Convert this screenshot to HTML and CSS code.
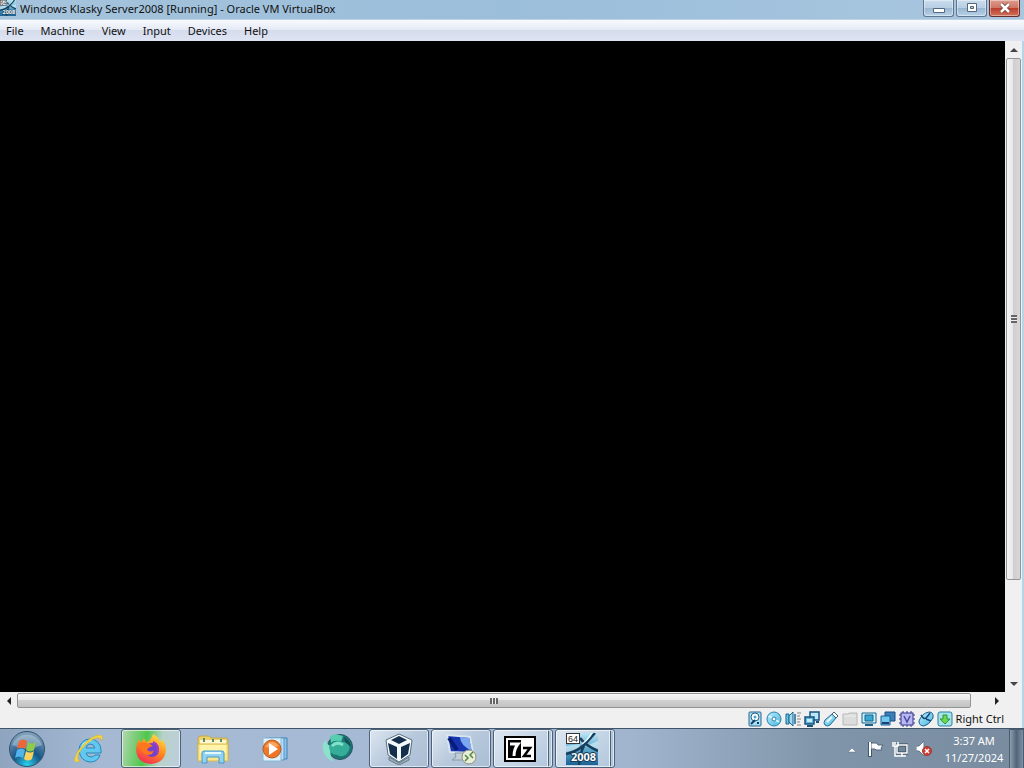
FILE: index.html
```
<!DOCTYPE html>
<html lang="en">

<head>
    <meta charset="UTF-8">
    <meta name="viewport" content="width=device-width, initial-scale=1.0">
    <title>Windows Klasky Server2008 [Running] - Oracle VM VirtualBox</title>
    <link rel="stylesheet" href="styles.css">
</head>

<body>
    <!-- shared gradients and the 2008 machine icon -->
    <svg class="defs" aria-hidden="true">
        <defs>
            <linearGradient id="sky" x1="0" y1="0" x2="0" y2="1">
                <stop offset="0" stop-color="#b9e4f3" />
                <stop offset=".5" stop-color="#5fa9cf" />
                <stop offset="1" stop-color="#1a6294" />
            </linearGradient>
            <linearGradient id="cyan" x1="0" y1="0" x2="1" y2="1">
                <stop offset="0" stop-color="#bfefff" />
                <stop offset="1" stop-color="#45b5e0" />
            </linearGradient>
            <symbol id="server2008" viewBox="0 0 32 32">
                <rect width="32" height="32" fill="url(#sky)" />
                <path d="M0 13L14 11L12 17L0 19zM20 13L32 8V16z" fill="#e3f6fc" opacity=".6" />
                <path d="M0 21Q12 18 18 12T29 0M14 5Q19 12 32 18M18 13Q14 20 13 32" fill="none" stroke="#173f5a" stroke-width="2.500" />
                <path d="M16 11Q22 7 26 0" fill="none" stroke="#e4f8ff" stroke-width="1.500" />
                <rect x=".5" y=".5" width="13" height="10" fill="#fff" stroke="#333" />
                <text x="2" y="9" font-size="9" font-family="Liberation Sans, sans-serif" fill="#222">64</text>
                <text x="5" y="28" font-size="11" font-weight="bold" font-family="Open Sans, sans-serif" fill="#fff" stroke="#143b54" stroke-width="2" paint-order="stroke">2008</text>
            </symbol>
        </defs>
    </svg>

    <header class="titlebar">
        <svg class="title-icon" viewBox="0 0 32 32"><use href="#server2008" /></svg>
        <h1>Windows Klasky Server2008 [Running] - Oracle VM VirtualBox</h1>
        <div class="window-buttons">
            <button class="win-btn" aria-label="Minimize">
                <svg width="14" height="12" viewBox="0 0 14 12"><path d="M1.500 6.500h11v4h-11z" fill="#fff" stroke="#53677f" /></svg>
            </button>
            <button class="win-btn" aria-label="Maximize">
                <svg width="14" height="12" viewBox="0 0 14 12">
                    <path d="M2.500 1.500h9v8h-9z" fill="#fff" stroke="#53677f" />
                    <path d="M5.500 4.500h3v2h-3z" fill="#b4cbe2" stroke="#53677f" />
                </svg>
            </button>
            <button class="win-btn close" aria-label="Close">
                <svg width="14" height="12" viewBox="0 0 14 12">
                    <path d="M3 2l8 8M11 2L3 10" stroke="#703b3b" stroke-width="4" />
                    <path d="M3 2l8 8M11 2L3 10" stroke="#fff" stroke-width="2.500" />
                </svg>
            </button>
        </div>
    </header>

    <nav class="menubar">
        <a href="#">File</a>
        <a href="#">Machine</a>
        <a href="#">View</a>
        <a href="#">Input</a>
        <a href="#">Devices</a>
        <a href="#">Help</a>
    </nav>

    <main class="viewport">
        <div class="screen"></div>
        <div class="scroll vertical">
            <button aria-label="Scroll up"><svg width="8" height="4" viewBox="0 0 8 4"><path d="M0 4L4 0L8 4z" fill="#444" /></svg></button>
            <div class="thumb"><span class="grip"></span></div>
            <div class="track"></div>
            <button aria-label="Scroll down"><svg width="8" height="4" viewBox="0 0 8 4"><path d="M0 0L4 4L8 0z" fill="#444" /></svg></button>
        </div>
        <div class="scroll horizontal">
            <button aria-label="Scroll left"><svg width="4" height="8" viewBox="0 0 4 8"><path d="M4 0L0 4L4 8z" fill="#222" /></svg></button>
            <div class="thumb"><span class="grip"></span></div>
            <div class="track"></div>
            <button aria-label="Scroll right"><svg width="4" height="8" viewBox="0 0 4 8"><path d="M0 0L4 4L0 8z" fill="#222" /></svg></button>
        </div>
    </main>

    <footer class="statusbar">
        <!-- hard disk -->
        <svg viewBox="0 0 16 16">
            <rect x="2" y="1" width="12" height="14" rx="1" fill="#a9dff3" stroke="#28638d" />
            <circle cx="8" cy="6" r="4" fill="#fff" stroke="#28638d" />
            <circle cx="8" cy="6" r="1.500" fill="#48a7d3" />
            <path d="M4 13l4-4M10 12h2" stroke="#123f67" stroke-width="2" />
        </svg>
        <!-- optical disk -->
        <svg viewBox="0 0 16 16">
            <circle cx="8" cy="8" r="7" fill="url(#cyan)" stroke="#2782ad" />
            <path d="M8 8L3 5M8 8l5 3" stroke="#d9f7ff" stroke-width="2" />
            <circle cx="8" cy="8" r="2" fill="#fff" stroke="#2782ad" />
        </svg>
        <!-- audio -->
        <svg viewBox="0 0 16 16">
            <path d="M1 3h3v10H1z" fill="#69c4e8" stroke="#1d658e" />
            <path d="M4 5l4-4v14l-4-4z" fill="#9adcf3" stroke="#1d658e" />
            <path d="M10 3v10" stroke="#1d658e" stroke-width="1.500" />
            <path d="M12 2h4M12 5h3M12 8h4M12 11h3M12 14h4" stroke="#bbb" stroke-width="2" />
        </svg>
        <!-- network -->
        <svg viewBox="0 0 16 16">
            <path d="M6 1h9v8H6z" fill="#b8e9f8" stroke="#1a527c" stroke-width="1.500" />
            <path d="M1 6h9v7H1z" fill="#59b9e3" stroke="#1a527c" stroke-width="1.500" />
            <path d="M3 8h5v3H3z" fill="#c8f0fb" />
            <path d="M3 15h6M12 11h3" stroke="#1a527c" stroke-width="2" />
        </svg>
        <!-- usb -->
        <svg viewBox="0 0 16 16">
            <path d="M2 9l7-6 4 4-6 7q-3 2-5 0-2-2 0-5z" fill="url(#cyan)" stroke="#266c93" />
            <path d="M9 3l2-2 4 4-2 2z" fill="#fff" stroke="#45647a" />
            <path d="M4 11l5-5" stroke="#e7faff" stroke-width="2" />
        </svg>
        <!-- shared folders -->
        <svg viewBox="0 0 16 16">
            <path d="M1 3h5l1-1h8v12H1z" fill="#dcdcdc" stroke="#b8b8b8" />
            <path d="M2 5h12" stroke="#eee" />
        </svg>
        <!-- display -->
        <svg viewBox="0 0 16 16">
            <path d="M1 2h14v10H1z" fill="#c8f0fb" stroke="#1a638b" />
            <path d="M4 4h8v6H4z" fill="#39a6d3" stroke="#1a638b" />
            <path d="M4 14h8" stroke="#1a638b" stroke-width="2" />
        </svg>
        <!-- recording -->
        <svg viewBox="0 0 16 16">
            <path d="M5 1h10v9H5z" fill="#397eb9" stroke="#1d4b83" />
            <path d="M1 5h9v9H1z" fill="#70c7ee" stroke="#1d5d91" />
            <path d="M2 12h7" stroke="#1d3c78" stroke-width="2" />
        </svg>
        <!-- cpu features -->
        <svg viewBox="0 0 16 16">
            <rect x="2" y="2" width="12" height="12" fill="#b8b7f2" stroke="#34348a" />
            <path d="M4 0v2M8 0v2M12 0v2M4 14v2M8 14v2M12 14v2M0 4h2M0 8h2M0 12h2M14 4h2M14 8h2M14 12h2" stroke="#34348a" />
            <path d="M5 5l3 6 3-6" fill="none" stroke="#4949a2" stroke-width="1.500" />
        </svg>
        <!-- mouse -->
        <svg viewBox="0 0 16 16">
            <path d="M1 10Q1 15 6 15Q11 14 15 7Q16 1 11 1Q4 2 1 10z" fill="url(#cyan)" stroke="#225d8b" />
            <path d="M3 4Q6 9 8 7T12 2M8 8l5 2" fill="none" stroke="#174a77" stroke-width="1.500" />
        </svg>
        <!-- keyboard capture -->
        <svg viewBox="0 0 16 16">
            <rect x="1" y="1" width="14" height="14" rx="2" fill="#a4e4e8" stroke="#287fa2" />
            <path d="M6 4h4v4h3l-5 5-5-5h3z" fill="#6ad94f" stroke="#2f9342" />
        </svg>
        <span>Right Ctrl</span>
    </footer>

    <div class="taskbar">
        <button class="start" aria-label="Start">
            <svg width="38" height="38" viewBox="0 0 38 38">
                <defs>
                    <radialGradient id="orb" cx=".5" cy=".95" r=".9">
                        <stop offset="0" stop-color="#28d3ef" />
                        <stop offset=".45" stop-color="#175587" />
                        <stop offset="1" stop-color="#7f9fba" />
                    </radialGradient>
                </defs>
                <circle cx="19" cy="19" r="17.500" fill="url(#orb)" stroke="#31526b" />
                <path d="M4 15A16 16 0 0 1 34 15Q19 22 4 15z" fill="#fff" opacity=".3" />
                <path d="M11 11q4-3 8 0l-2 8q-4-3-8 0z" fill="#ee6536" />
                <path d="M20 12q4 3 8 0l-2 8q-4 3-8 0z" fill="#8fcb4b" />
                <path d="M9 20q4-3 8 0l-2 8q-4-3-8 0z" fill="#51b5ec" />
                <path d="M18 21q4 3 8 0l-2 8q-4 3-8 0z" fill="#fbd35c" />
            </svg>
        </button>
        <button class="task" aria-label="Internet Explorer">
            <svg width="32" height="32" viewBox="0 0 32 32">
                <path d="M6 17A11 11 0 0 1 28 17V20H13Q14 24 18 24Q21 24 22 22H27Q25 29 17 29Q7 28 6 17zM13 15H22Q21 11 17 11Q14 11 13 15z" fill="#62c8f0" stroke="#2589bd" />
                <path d="M9 14Q11 8 18 8" fill="none" stroke="#c7f1ff" stroke-width="1.500" />
                <path d="M7 28Q-3 32 5 18Q17 2 27 2Q31 3 29 8Q28 4 23 5Q13 9 6 20Q3 27 7 28z" fill="#f3d647" stroke="#d0aa27" stroke-width=".5" />
            </svg>
        </button>
        <button class="task open firefox" aria-label="Firefox">
            <svg width="32" height="32" viewBox="0 0 32 32">
                <defs>
                    <linearGradient id="fox" x1=".8" y1="0" x2=".3" y2="1">
                        <stop offset="0" stop-color="#ffe54a" />
                        <stop offset=".5" stop-color="#ff8a1c" />
                        <stop offset="1" stop-color="#f22b59" />
                    </linearGradient>
                </defs>
                <path d="M18 1Q24 4 25 9Q27 8 27 6Q31 11 31 17Q30 30 16 31Q2 30 1 17Q1 11 4 6L6 10L9 5L11 9Q16 8 18 1z" fill="url(#fox)" />
                <circle cx="17" cy="17" r="7" fill="#7441cc" />
                <path d="M4 10Q12 8 18 13Q13 14 12 17Q16 20 19 17Q17 24 10 21Q5 18 4 10z" fill="#ff771d" />
                <path d="M18 9Q25 12 22 20" fill="none" stroke="#a13ccb" stroke-width="2" />
            </svg>
        </button>
        <button class="task" aria-label="Windows Explorer">
            <svg width="34" height="32" viewBox="0 0 34 32">
                <path d="M2 6q0-3 3-3h8l2 2h15q2 0 2 3v18H2z" fill="#ecd068" stroke="#c2a64f" />
                <path d="M4 7h26v5H4z" fill="#fff8ce" />
                <path d="M8 5v4M17 6v3M25 6v3" stroke="#5b8d68" stroke-width="2" />
                <path d="M2 11h30v17H2z" fill="#f8e78e" stroke="#d7b94d" />
                <path d="M4 12h26v8H4z" fill="#fff4a9" />
                <path d="M6 30V20q0-2 2-2h18q2 0 2 2v10h-5v-6H11v6z" fill="#92d2f1" stroke="#4a98c6" />
                <path d="M9 20h16" stroke="#e2f9ff" stroke-width="2" />
            </svg>
        </button>
        <button class="task" aria-label="Windows Media Player">
            <svg width="28" height="28" viewBox="0 0 28 28">
                <path d="M8 3h18v21H8z" fill="#8fc2e8" stroke="#3f80b8" />
                <path d="M5 3h18v22H5z" fill="#b8def4" stroke="#5795c6" />
                <path d="M2 3h18v23H2z" fill="#dff2fb" stroke="#86b8d7" />
                <circle cx="11" cy="14" r="9" fill="#ee7625" stroke="#b45b2c" />
                <path d="M4 12Q10 2 18 11Q11 14 4 12z" fill="#ffbb75" opacity=".7" />
                <path d="M8 8v12l9-6z" fill="#fff" />
            </svg>
        </button>
        <button class="task" aria-label="Globe">
            <svg width="34" height="32" viewBox="0 0 34 32">
                <circle cx="20" cy="14" r="12.500" fill="#1c7774" stroke="#28565f" />
                <path d="M10 3Q15 0 23 3L21 9Q15 6 11 10z" fill="#58cdb0" />
                <path d="M3 10Q1 24 14 29Q8 20 12 13Q7 13 6 7z" fill="#8ce1cc" />
                <path d="M9 14Q15 5 23 9Q31 9 29 17Q25 26 17 22Q10 22 9 14z" fill="#35ad98" />
                <path d="M12 13Q17 8 23 12" fill="none" stroke="#82e2ca" stroke-width="3" />
                <path d="M24 4q6 3 7 10l-6-5z" fill="#165158" />
            </svg>
        </button>
        <button class="task open" aria-label="Oracle VM VirtualBox">
            <svg width="30" height="32" viewBox="0 0 30 32">
                <path d="M5 24l10 6 10-6v3l-10 5-10-5z" fill="#9bb0be" stroke="#667b88" />
                <path d="M2 7L15 1L28 7L26 22L15 29L4 22z" fill="#f4f9fc" stroke="#596f7f" />
                <path d="M7 7L15 3L23 7L15 11zM4 10L13 14V26L6 21zM17 14L26 10L24 21L17 26z" fill="#152e4c" />
            </svg>
        </button>
        <button class="task open" aria-label="Remote Desktop">
            <svg width="32" height="32" viewBox="0 0 32 32">
                <path d="M2 2L25 4L28 20L5 19z" fill="#1835b0" stroke="#d9e5ef" stroke-width="2" />
                <path d="M15 4L24 5L27 18Q15 12 15 4z" fill="#7ba9ef" />
                <path d="M4 5l8 12" stroke="#061c79" stroke-width="4" />
                <path d="M10 20h8l1 4h5v3H7l4-3z" fill="#c2ced5" stroke="#899aa5" />
                <circle cx="24" cy="24" r="7" fill="#e9edda" stroke="#8a947e" />
                <path d="M20 22l3 3-3 3M28 19l-3 3 3 3" fill="none" stroke="#528a3d" stroke-width="1.500" />
            </svg>
        </button>
        <button class="task open stacked" aria-label="7-Zip">
            <svg width="32" height="26" viewBox="0 0 32 26">
                <rect x="1" y="1" width="30" height="24" fill="#fff" stroke="#000" stroke-width="2" />
                <rect x="4" y="4" width="13" height="18" fill="#000" />
                <path d="M6 8h8Q10 13 10 20" fill="none" stroke="#fff" stroke-width="3" />
                <path d="M19 12h7l-6 8h7" fill="none" stroke="#000" stroke-width="2.500" />
            </svg>
        </button>
        <button class="task open stacked" aria-label="Windows Klasky Server2008">
            <svg width="32" height="32" viewBox="0 0 32 32"><use href="#server2008" /></svg>
        </button>

        <div class="tray">
            <button class="tray-more" aria-label="Show hidden icons">
                <svg width="8" height="16" viewBox="0 0 8 16"><path d="M0 11L4 7L8 11z" fill="#fff" stroke="#5a6f82" stroke-width=".5" /></svg>
            </button>
            <button aria-label="Action Center">
                <svg width="16" height="16" viewBox="0 0 16 16">
                    <path d="M2 1v15" stroke="#42576c" stroke-width="4" />
                    <path d="M3 2h6l1 2h5l-2 3 1 2H8L7 8H3z" fill="#fff" stroke="#506579" />
                    <path d="M2 1v14" stroke="#fff" stroke-width="2" />
                </svg>
            </button>
            <button aria-label="Network">
                <svg width="16" height="16" viewBox="0 0 16 16">
                    <path d="M5 4h10v8H5z" fill="#718799" stroke="#34495d" stroke-width="3" />
                    <path d="M5 4h10v8H5zM10 12v3M6 15h8" fill="none" stroke="#fff" stroke-width="1.500" />
                    <path d="M1 1v4h5V1M3 1v3M3 5v10h3" fill="none" stroke="#fff" stroke-width="1.500" />
                </svg>
            </button>
            <button aria-label="Volume muted">
                <svg width="16" height="16" viewBox="0 0 16 16">
                    <path d="M0 5h3l5-5v15l-5-5H0z" fill="#fff" stroke="#667889" />
                    <circle cx="11" cy="10" r="4.500" fill="#cf3c34" stroke="#a4382f" />
                    <path d="M9 8l4 4M13 8l-4 4" stroke="#fff" stroke-width="1.500" />
                </svg>
            </button>
            <time class="clock" datetime="2024-11-27T03:37">3:37 AM<br>11/27/2024</time>
            <button class="show-desktop" aria-label="Show desktop"></button>
        </div>
    </div>
</body>

</html>
```
FILE: styles.css
```
* {
    box-sizing: border-box;
}

body {
    margin: 0;
    height: 100vh;
    display: flex;
    flex-direction: column;
    overflow: hidden;
    font-family: "Noto Sans", "Open Sans", sans-serif;
    font-size: 11px;
    color: #111;
    background-color: #f0f0f0;
}

button {
    padding: 0;
    border: none;
    background: none;
    display: flex;
    align-items: center;
    justify-content: center;
}

svg {
    display: block;
    flex: none;
}

.defs {
    position: absolute;
    width: 0;
    height: 0;
}

/* title bar */
.titlebar {
    flex: none;
    height: 20px;
    display: flex;
    background: linear-gradient(to right, #a5c3dc, #9bbeda 50%, #a9c6df);
    border-bottom: 1px solid #bdd3e8;
}

.title-icon {
    width: 16px;
    height: 16px;
}

h1 {
    margin: 0 auto 0 4px;
    font-size: 11px;
    line-height: 18px;
    font-weight: normal;
    white-space: nowrap;
}

.window-buttons {
    display: flex;
    gap: 2px;
    padding-right: 4px;
}

.win-btn {
    width: 31px;
    height: 17px;
    border: 1px solid #60778f;
    border-top: none;
    border-radius: 0 0 3px 3px;
    background: linear-gradient(#c9dcec, #b7cee4 50%, #98b5d0 50%, #b9d2e9);
    box-shadow: inset 0 0 0 1px rgba(255, 255, 255, 0.4);
}

.win-btn.close {
    border-color: #6c2b2b;
    background: linear-gradient(#dc9b8c, #cf7664 50%, #b83d2b 50%, #d47158);
}

/* menu */
.menubar {
    flex: none;
    height: 21px;
    display: flex;
    gap: 17px;
    padding-left: 6px;
    line-height: 21px;
    background: linear-gradient(#f8fafd, #e5eaf5 45%, #d5dcec 50%, #dee4f2);
}

.menubar a {
    color: #111;
    text-decoration: none;
}

/* guest screen and its scrollbars */
.viewport {
    flex: 1;
    min-height: 0;
    display: grid;
    grid-template-columns: 1fr 17px;
    grid-template-rows: 1fr 17px;
    border-right: 2px solid #b5d6ea;
}

.screen {
    background-color: #000;
}

.scroll {
    display: flex;
    background-color: #f0f0f0;
}

.scroll button {
    flex: 0 0 17px;
}

.vertical {
    flex-direction: column;
    padding: 0 1px;
}

.thumb {
    flex: 521;
    display: flex;
    align-items: center;
    justify-content: center;
    border: 1px solid #949494;
    border-radius: 2px;
}

.track {
    flex: 95;
}

.vertical .thumb {
    background: linear-gradient(to right, #f5f5f5, #e6e6e8 50%, #cfcfd2 50%, #d8d8db);
}

.horizontal .thumb {
    flex: 954;
    background: linear-gradient(#f5f5f5, #e7e7e7 50%, #d0d0d0 50%, #c3c3c3);
}

.horizontal {
    padding: 1px 0;
}

.horizontal .track {
    flex: 17;
}

.grip {
    width: 8px;
    height: 6px;
    background: repeating-linear-gradient(to right, #666 0 2px, #eee 2px 3px);
}

.vertical .grip {
    width: 6px;
    height: 8px;
    background: repeating-linear-gradient(#666 0 2px, #eee 2px 3px);
}

/* status bar */
.statusbar {
    flex: none;
    height: 19px;
    display: flex;
    align-items: center;
    justify-content: flex-end;
    gap: 3px;
    padding: 1px 18px 0 0;
    line-height: 18px;
    border-right: 2px solid #b5d6ea;
}

.statusbar svg {
    width: 16px;
    height: 16px;
}

/* taskbar */
.taskbar {
    flex: none;
    height: 40px;
    display: flex;
    gap: 2px;
    border-top: 1px solid #3f566a;
    background: linear-gradient(to right, #8fa5bf, #a5b9d3 10%, #a7bad5 45%, #a0b4ce 62%, #8195aa 80%, #788b9f);
}

.start {
    width: 57px;
    padding-right: 3px;
}

.task {
    width: 60px;
    border: 1px solid transparent;
    border-radius: 3px;
}

.task.open {
    border-color: #4d6279;
    background: linear-gradient(135deg, #dce6f1, #b8c9dc 50%, #a9bdd4);
    box-shadow: inset 0 0 0 1px rgba(255, 255, 255, 0.6);
}

.task.firefox {
    background: linear-gradient(100deg, #b5d7b3, #4fc64c 40%, #b8d2ca 65%, #bdcddd);
}

/* several windows grouped under one button */
.task.stacked {
    padding-right: 6px;
    background: linear-gradient(to left, #b3c6da 3px, #4d6279 3px, #4d6279 4px, #e5edf5 4px, #e5edf5 5px, transparent 5px), linear-gradient(135deg, #dce6f1, #b1c6dc);
}

.tray {
    margin-left: auto;
    display: flex;
    align-items: center;
    gap: 8px;
    color: #fff;
}

.tray-more {
    width: 16px;
}

.clock {
    min-width: 60px;
    margin-left: 4px;
    text-align: center;
    line-height: 17px;
}

.show-desktop {
    align-self: stretch;
    width: 15px;
    margin-left: -3px;
    border: 1px solid #4b5e70;
    border-bottom: none;
    background: linear-gradient(to right, #8c9dad, #526579 50%, #7d91a4);
}
```
